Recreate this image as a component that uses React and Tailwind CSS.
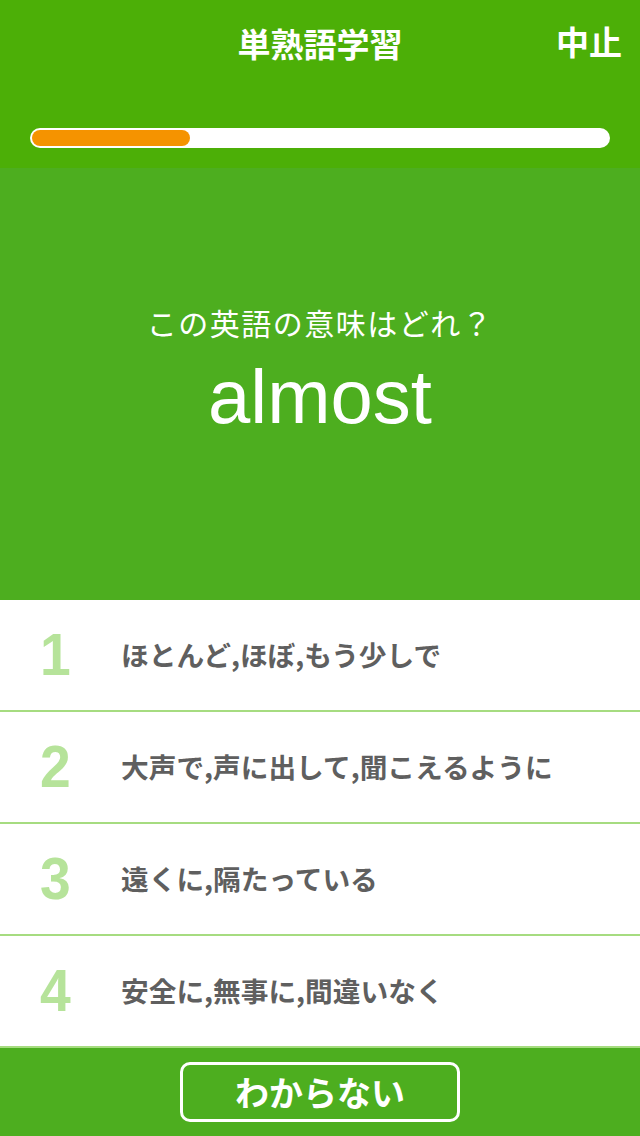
import React from "react";

const options = [
  "ほとんど,ほぼ,もう少しで",
  "大声で,声に出して,聞こえるように",
  "遠くに,隔たっている",
  "安全に,無事に,間違いなく",
];

export default function App() {
  const jp = { fontFamily: '"Noto Sans CJK JP", "Liberation Sans", sans-serif' };
  return (
    <div className="w-[640px] h-[1136px] flex flex-col overflow-hidden" style={jp}>
      <div className="h-[168px] bg-[#4caf07] flex flex-col">
        <div className="relative h-[86px] flex items-center justify-center">
          <span className="text-white text-[33px] font-bold leading-none">単熟語学習</span>
          <span className="absolute right-[18px] top-[25px] text-white text-[33px] font-bold leading-none">中止</span>
        </div>
        <div className="px-[30px] pt-[42px]">
          <div className="h-[20px] bg-white rounded-full p-[2px]">
            <div className="h-full w-[158px] bg-[#f59300] rounded-full" />
          </div>
        </div>
      </div>
      <div className="h-[432px] bg-[#4dae1f] flex flex-col items-center pt-[139px]">
        <div className="text-white text-[30px] leading-none tracking-[1.5px]">この英語の意味はどれ？</div>
        <div className="text-white text-[76px] leading-none mt-[22px]" style={{ fontFamily: '"Liberation Sans", Arial, sans-serif' }}>almost</div>
      </div>
      <div className="flex flex-col bg-white">
        {options.map((o, i) => (
          <div key={i} className="h-[112px] flex items-center border-b-2 border-[#a6dc80]">
            <div className="w-[121px] pl-[40px] shrink-0">
              <span
                className="text-[60px] font-bold text-[#b6e39a] leading-none inline-block origin-left scale-x-[0.92]"
                style={{ fontFamily: '"Liberation Sans", Arial, sans-serif' }}
              >
                {i + 1}
              </span>
            </div>
            <span className="text-[27.7px] font-bold text-[#5f5f5f] leading-none">{o}</span>
          </div>
        ))}
      </div>
      <div className="flex-1 bg-[#4dae1f] flex justify-center pt-[14px]">
        <div className="w-[280px] h-[60px] border-[3px] border-white rounded-[10px] flex items-center justify-center">
          <span className="text-white text-[34px] font-bold leading-none">わからない</span>
        </div>
      </div>
    </div>
  );
}
